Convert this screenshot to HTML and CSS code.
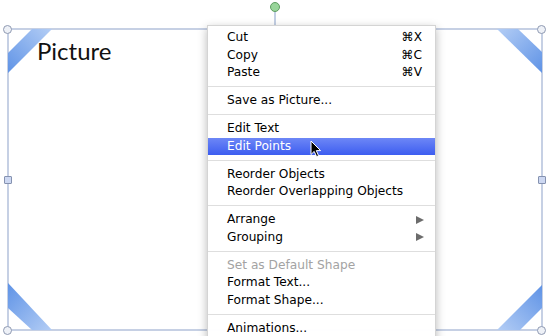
FILE: index.html
```html
<!DOCTYPE html>
<html lang="en">
<head>
    <meta charset="UTF-8">
    <title>Picture - Context Menu</title>
    <link rel="stylesheet" href="styles.css">
</head>
<body>
    <div class="stage">
        <div class="frame">
            <svg class="ribbons" viewBox="0 0 534 301" width="534" height="301">
                <defs>
                    <linearGradient id="gl" x1="0" y1="1" x2="1" y2="0">
                        <stop offset="0" stop-color="#5f93e6"/>
                        <stop offset="1" stop-color="#b3cdf5"/>
                    </linearGradient>
                    <linearGradient id="gr" x1="1" y1="1" x2="0" y2="0">
                        <stop offset="0" stop-color="#5f93e6"/>
                        <stop offset="1" stop-color="#b3cdf5"/>
                    </linearGradient>
                    <linearGradient id="gbl" x1="0" y1="0" x2="1" y2="1">
                        <stop offset="0" stop-color="#5f93e6"/>
                        <stop offset="1" stop-color="#b3cdf5"/>
                    </linearGradient>
                    <linearGradient id="gbr" x1="1" y1="0" x2="0" y2="1">
                        <stop offset="0" stop-color="#5f93e6"/>
                        <stop offset="1" stop-color="#b3cdf5"/>
                    </linearGradient>
                </defs>
                <polygon points="24,0 44,0 0,44 0,24" fill="url(#gl)"/>
                <polygon points="489,0 510,0 534,23 534,44" fill="url(#gr)"/>
                <polygon points="0,254 44,301 24,301 0,279" fill="url(#gbl)"/>
                <polygon points="534,256 534,279 512,301 489,301" fill="url(#gbr)"/>
            </svg>
            <div class="title">Picture</div>
        </div>

        <!-- selection handles -->
        <span class="handle corner" style="left: 3px; top: 25px;"></span>
        <span class="handle corner" style="left: 537px; top: 25px;"></span>
        <span class="handle corner" style="left: 3px; top: 326px;"></span>
        <span class="handle corner" style="left: 537px; top: 326px;"></span>
        <span class="handle side" style="left: 4px; top: 176px;"></span>
        <span class="handle side" style="left: 538px; top: 176px;"></span>
        <span class="rotate-line"></span>
        <span class="handle rotate"></span>

        <div class="menu">
            <div class="menu-item"><span>Cut</span><span class="key">⌘X</span></div>
            <div class="menu-item"><span>Copy</span><span class="key">⌘C</span></div>
            <div class="menu-item"><span>Paste</span><span class="key">⌘V</span></div>
            <div class="separator"></div>
            <div class="menu-item">Save as Picture...</div>
            <div class="separator"></div>
            <div class="menu-item">Edit Text</div>
            <div class="menu-item active">Edit Points</div>
            <div class="separator"></div>
            <div class="menu-item">Reorder Objects</div>
            <div class="menu-item">Reorder Overlapping Objects</div>
            <div class="separator"></div>
            <div class="menu-item"><span>Arrange</span><span class="arrow"></span></div>
            <div class="menu-item"><span>Grouping</span><span class="arrow"></span></div>
            <div class="separator"></div>
            <div class="menu-item disabled">Set as Default Shape</div>
            <div class="menu-item">Format Text...</div>
            <div class="menu-item">Format Shape...</div>
            <div class="separator"></div>
            <div class="menu-item">Animations...</div>
        </div>

        <svg class="cursor" viewBox="0 0 12 18" width="12" height="18">
            <path d="M1 1 L1 14.5 L4.2 11.4 L6.6 16.6 L8.6 15.7 L6.3 10.6 L10.6 10.6 Z" fill="#000" stroke="#fff" stroke-width="1" stroke-linejoin="round"/>
        </svg>
    </div>
</body>
</html>
```

FILE: styles.css
```css
body {
    margin: 0;
    background-color: #ffffff;
}

.stage {
    position: relative;
    width: 550px;
    height: 336px;
    overflow: hidden;
    background-color: #ffffff;
}

.frame {
    position: relative;
    box-sizing: border-box;
    width: 536px;
    height: 303px;
    margin: 0 0 0 7px;
    top: 28px;
    border: 2px solid #c6d0e4;
}

.ribbons {
    position: absolute;
    left: -1px;
    top: -1px;
}

.title {
    position: relative;
    padding: 9px 0 0 28px;
    font-family: Lato, "Open Sans", sans-serif;
    font-size: 24px;
    line-height: 24px;
    color: #111111;
}

.handle {
    position: absolute;
    box-sizing: border-box;
}

.handle.corner {
    width: 9px;
    height: 9px;
    border-radius: 50%;
    border: 1.5px solid #8f9ab2;
    background-color: #eef1f7;
}

.handle.side {
    width: 8px;
    height: 8px;
    border: 1.5px solid #8592b0;
    background-color: #cdd8f2;
    border-radius: 1px;
}

.handle.rotate {
    left: 270px;
    top: 2px;
    width: 10px;
    height: 10px;
    border-radius: 50%;
    border: 1.5px solid #5f9d62;
    background-color: #98d59a;
}

.rotate-line {
    position: absolute;
    left: 274px;
    top: 11px;
    width: 2px;
    height: 16px;
    background-color: #c3cfe4;
}

.menu {
    position: absolute;
    left: 207px;
    top: 25px;
    width: 229px;
    padding: 3px 0 20px;
    background-color: rgba(255, 255, 255, 0.98);
    border: 1px solid #d4d4d4;
    box-sizing: border-box;
    box-shadow: 0 3px 9px rgba(0, 0, 0, 0.28);
    font-family: "DejaVu Sans", sans-serif;
    font-size: 12.2px;
    color: #000000;
}

.menu-item {
    display: flex;
    justify-content: space-between;
    align-items: center;
    height: 17.5px;
    line-height: 17.5px;
    padding: 0 11px 0 19px;
    white-space: nowrap;
}

.menu-item .key {
    padding-right: 2px;
}

.menu-item.active {
    background: linear-gradient(#6d87f6, #3d5df0);
    color: #ffffff;
}

.menu-item.disabled {
    color: #a3a3a3;
}

.arrow {
    width: 0;
    height: 0;
    border-top: 4.5px solid transparent;
    border-bottom: 4.5px solid transparent;
    border-left: 8px solid #6c6c6c;
}

.separator {
    height: 1px;
    margin: 4.75px 0;
    background-color: #dedede;
}

.cursor {
    position: absolute;
    left: 310px;
    top: 140px;
}
```
